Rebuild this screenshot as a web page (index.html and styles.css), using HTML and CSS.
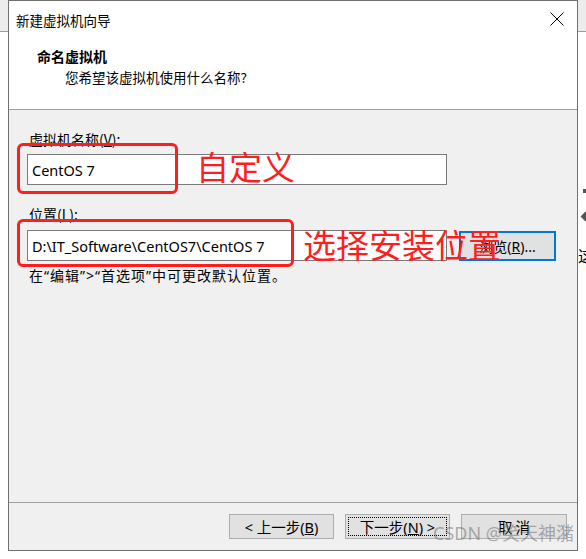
FILE: index.html
```html
<!DOCTYPE html>
<html>
<head>
    <meta charset="utf-8">
    <title>新建虚拟机向导</title>
    <link rel="stylesheet" href="styles.css">
</head>
<body>
    <div class="side-icons">
        <span class="sq"></span>
        <span class="dia"></span>
        <span class="ch">这</span>
    </div>

    <div class="window">
        <div class="titlebar">
            <span class="title">新建虚拟机向导</span>
            <svg class="close" width="14" height="14" viewBox="0 0 14 14">
                <path d="M0.5 0.5 L13.5 13.5 M13.5 0.5 L0.5 13.5" stroke="#000" stroke-width="1" fill="none"/>
            </svg>
        </div>

        <div class="header">
            <div class="h-title">命名虚拟机</div>
            <div class="h-sub">您希望该虚拟机使用什么名称?</div>
        </div>

        <div class="content">
            <div class="label">虚拟机名称(<u>V</u>):</div>
            <input class="field" type="text" value="CentOS 7" readonly>

            <div class="label second">位置(<u>L</u>):</div>
            <div class="row">
                <input class="field" type="text" value="D:\IT_Software\CentOS7\CentOS 7" readonly>
                <button class="btn browse">浏览(<u>R</u>)...</button>
            </div>
            <div class="hint">在“编辑”&gt;“首选项”中可更改默认位置。</div>
        </div>

        <div class="footer">
            <button class="btn">&lt; 上一步(<u>B</u>)</button>
            <button class="btn default">下一步(<u>N</u>) &gt;</button>
            <button class="btn cancel">取消</button>
        </div>

        <!-- red annotations drawn over the dialog -->
        <div class="mark mark-name"></div>
        <div class="mark mark-path"></div>
        <div class="note note-name">自定义</div>
        <div class="note note-path">选择安装位置</div>

        <div class="watermark">CSDN @笑天神潴</div>
    </div>
</body>
</html>
```

FILE: styles.css
```css
body {
    margin: 0;
    width: 586px;
    height: 559px;
    overflow: hidden;
    font-family: "Noto Sans", "Noto Sans CJK SC", sans-serif;
    font-size: 14px;
    color: #000;
    background: linear-gradient(#ececec 0, #ececec 31px, #7fa3cc 31px, #7fa3cc 32px, #fff 32px);
    position: relative;
}

.window {
    position: relative;
    box-sizing: border-box;
    width: 570px;
    height: 551px;
    margin-left: 8px;
    border: 1px solid #707070;
    background: #f0f0f0;
    display: flex;
    flex-direction: column;
}

.titlebar {
    height: 31px;
    background: #fff;
    display: flex;
    align-items: center;
    justify-content: space-between;
    padding: 0 13px 0 7px;
}

.title {
    font-family: "Noto Sans CJK SC", sans-serif;
    font-size: 13.5px;
    line-height: 18px;
    margin-top: 6px;
}

.close {
    margin-top: 5px;
}

.header {
    height: 78px;
    background: #fff;
    border-bottom: 1px solid #a0a0a0;
    padding: 14px 0 0 28px;
    box-sizing: border-box;
}

.h-title {
    font-family: "Noto Sans CJK SC", sans-serif;
    font-weight: bold;
    font-size: 14px;
    line-height: 20px;
}

.h-sub {
    font-family: "Noto Sans CJK SC", sans-serif;
    font-size: 13.5px;
    line-height: 20px;
    margin: 1px 0 0 28px;
}

.content {
    flex: 1;
    padding: 20px 0 0 18px;
}

.label {
    font-family: "Noto Sans CJK SC", sans-serif;
    font-size: 14px;
    line-height: 18px;
    padding-left: 2px;
    margin-bottom: 6px;
}

.label.second {
    margin-top: 20px;
    margin-bottom: 7px;
}

.field {
    display: block;
    box-sizing: border-box;
    width: 420px;
    height: 31px;
    margin: 0;
    padding: 0 4px;
    border: 1px solid #7a7a7a;
    background: #fff;
    font-family: "Noto Sans", "Noto Sans CJK SC", sans-serif;
    font-size: 14.5px;
    color: #000;
    outline: none;
}

.row {
    display: flex;
    align-items: center;
    gap: 12px;
}

.hint {
    font-family: "Noto Sans", "Noto Sans CJK SC", sans-serif;
    font-size: 14px;
    line-height: 18px;
    letter-spacing: 1px;
    margin-top: 6px;
    padding-left: 2px;
}

.btn {
    box-sizing: border-box;
    width: 105px;
    height: 25px;
    padding: 0;
    border: 1px solid #adadad;
    background: #e1e1e1;
    font-family: "Noto Sans", "Noto Sans CJK SC", sans-serif;
    font-size: 14.5px;
    color: #000;
}

.btn.browse {
    width: 97px;
    height: 30px;
    border: 2px solid #0078d7;
    font-size: 14px;
}

.btn.default {
    outline: 1px dotted #000;
    outline-offset: -4px;
}

.btn.cancel {
    width: 106px;
    letter-spacing: 3px;
    text-indent: 3px;
}

.footer {
    height: 48px;
    box-sizing: border-box;
    border-top: 1px solid #a0a0a0;
    display: flex;
    justify-content: flex-end;
    align-items: flex-start;
    gap: 11px;
    padding: 11px 10px 0 0;
}

.mark {
    position: absolute;
    box-sizing: border-box;
    border: 3px solid #ff1e1e;
    border-radius: 6px;
}

.mark-name {
    left: 8px;
    top: 142px;
    width: 161px;
    height: 51px;
}

.mark-path {
    left: 8px;
    top: 218px;
    width: 277px;
    height: 48px;
}

.note {
    position: absolute;
    font-family: "Noto Sans CJK SC", sans-serif;
    font-size: 33px;
    line-height: 33px;
    color: #ff1e1e;
    white-space: nowrap;
}

.note-name {
    left: 187px;
    top: 149px;
}

.note-path {
    left: 294px;
    top: 227px;
}

.watermark {
    position: absolute;
    left: 424px;
    top: 521px;
    font-family: "Noto Sans", "Noto Sans CJK SC", sans-serif;
    font-size: 18px;
    line-height: 22px;
    color: rgba(110, 110, 110, 0.55);
    white-space: nowrap;
}

.side-icons {
    position: absolute;
    left: 578px;
    top: 180px;
    width: 8px;
    height: 90px;
    overflow: hidden;
}

.side-icons .sq {
    position: absolute;
    left: 5px;
    top: 9px;
    width: 3px;
    height: 4px;
    background: #555;
}

.side-icons .dia {
    position: absolute;
    left: 4px;
    top: 33px;
    width: 7px;
    height: 7px;
    background: #555;
    transform: rotate(45deg);
}

.side-icons .ch {
    position: absolute;
    left: 0;
    top: 66px;
    font-family: "Noto Sans CJK SC", sans-serif;
    font-size: 16px;
    line-height: 18px;
}
```
